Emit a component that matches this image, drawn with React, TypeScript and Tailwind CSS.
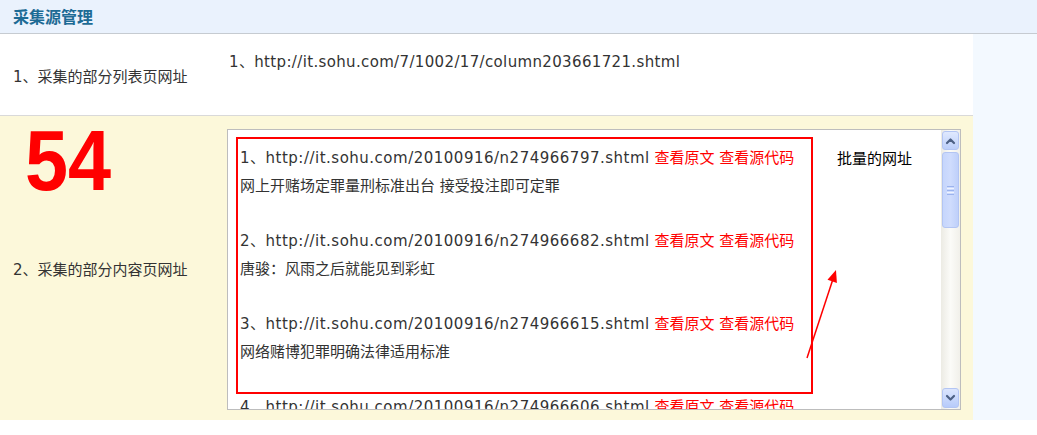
import React from "react";

const items = [
  { n: 1, id: "274966797", title: "网上开赌场定罪量刑标准出台 接受投注即可定罪" },
  { n: 2, id: "274966682", title: "唐骏：风雨之后就能见到彩虹" },
  { n: 3, id: "274966615", title: "网络赌博犯罪明确法律适用标准" },
  { n: 4, id: "274966606", title: "" },
];

function Chevron({ up }: { up: boolean }) {
  return (
    <svg width="11" height="8" viewBox="0 0 11 8">
      <path
        d={up ? "M2 6 L5.5 2.5 L9 6" : "M2 2 L5.5 5.5 L9 2"}
        fill="none"
        stroke="#4d6185"
        strokeWidth="2.2"
        strokeLinecap="round"
        strokeLinejoin="round"
      />
    </svg>
  );
}

function Scrollbar() {
  return (
    <div className="w-[19px] h-full flex flex-col p-[1px] bg-linear-to-r from-[#ecebe4] via-[#fbfbf8] to-[#f1f0ea]">
      <div className="h-[19px] w-[17px] rounded-[3px] border border-[#b3c5f3] bg-linear-to-b from-[#e0e9fe] to-[#bccffa] flex items-center justify-center">
        <Chevron up />
      </div>
      <div className="mt-[2px] h-[76px] w-[17px] rounded-[3px] border border-[#b3c5f3] bg-linear-to-r from-[#c6d6fc] via-[#cfdcfd] to-[#bfd0fa] flex flex-col items-center justify-center gap-[1px]">
        <div className="w-[7px] h-[1px] bg-[#9bb3ee]" />
        <div className="w-[7px] h-[1px] bg-[#eef3ff]" />
        <div className="w-[7px] h-[1px] bg-[#9bb3ee]" />
        <div className="w-[7px] h-[1px] bg-[#eef3ff]" />
        <div className="w-[7px] h-[1px] bg-[#9bb3ee]" />
      </div>
      <div className="flex-1" />
      <div className="h-[20px] w-[17px] rounded-[3px] border border-[#b3c5f3] bg-linear-to-b from-[#dbe5fd] to-[#b7cbfa] flex items-center justify-center">
        <Chevron up={false} />
      </div>
    </div>
  );
}

export default function App() {
  return (
    <div className="w-[1037px] h-[435px] bg-white text-[15px] text-[#333333] font-['DejaVu_Sans','Noto_Sans_CJK_SC',sans-serif] overflow-hidden">
      <div className="h-[34px] bg-[#eaf2fd] border-b border-[#c6cbd1] pl-[13px] pt-[6px] leading-[20px] text-[16px] font-bold text-[#1d6b95] font-['Noto_Sans_CJK_SC',sans-serif]">
        采集源管理
      </div>
      <div className="flex">
        <div className="w-[973px]">
          <div className="h-[82px] flex bg-white border-b border-[#d9d9d9]">
            <div className="w-[227px] pl-[13px] pt-[33px] leading-[20px]">1、采集的部分列表页网址</div>
            <div className="pl-[2px] pt-[18px] leading-[20px] tracking-[0.35px] whitespace-nowrap">
              1、http://it.sohu.com/7/1002/17/column203661721.shtml
            </div>
          </div>
          <div className="h-[304px] flex bg-[#fcf8da]">
            <div className="w-[227px] flex flex-col">
              <div className="pl-[25px] mt-[1px] h-[86px]">
                <span className="inline-block origin-left scale-x-[0.9] text-[86px] leading-none font-bold text-[#ff0000] font-['Liberation_Sans',Arial,sans-serif]">
                  54
                </span>
              </div>
              <div className="pl-[13px] mt-[57px] leading-[20px]">2、采集的部分内容页网址</div>
            </div>
            <div className="pt-[13px]">
              <div className="relative w-[734px] h-[281px] border border-[#bdbdbd] bg-white flex">
                <div className="flex-1 overflow-hidden pl-[12px] pt-[14px]">
                  {items.map((it) => (
                    <div key={it.n}>
                      <div className="h-[28px] leading-[28px] whitespace-nowrap">
                        <span className="tracking-[0.5px]">
                          {it.n}、http://it.sohu.com/20100916/n{it.id}.shtml
                        </span>{" "}
                        <span className="text-[#ff0000]">查看原文 查看源代码</span>
                      </div>
                      <div className="h-[28px] leading-[28px] whitespace-nowrap">{it.title}</div>
                      <div className="h-[27px]" />
                    </div>
                  ))}
                </div>
                <Scrollbar />
                <div className="absolute left-[8px] top-[7px] w-[577px] h-[257px] border-2 border-[#ff0000] pointer-events-none" />
                <div className="absolute left-[609px] top-[19px] leading-[20px] text-black">批量的网址</div>
                <svg className="absolute left-0 top-0 pointer-events-none" width="712" height="279" viewBox="0 0 712 279">
                  <line x1="579" y1="228" x2="605" y2="149" stroke="#ff0000" strokeWidth="1.5" />
                  <polygon points="608,140 608.9,153 599.5,149.8" fill="#ff0000" />
                </svg>
              </div>
            </div>
          </div>
        </div>
        <div className="flex-1 h-[386px] bg-[#f3f9ff]" />
      </div>
    </div>
  );
}
